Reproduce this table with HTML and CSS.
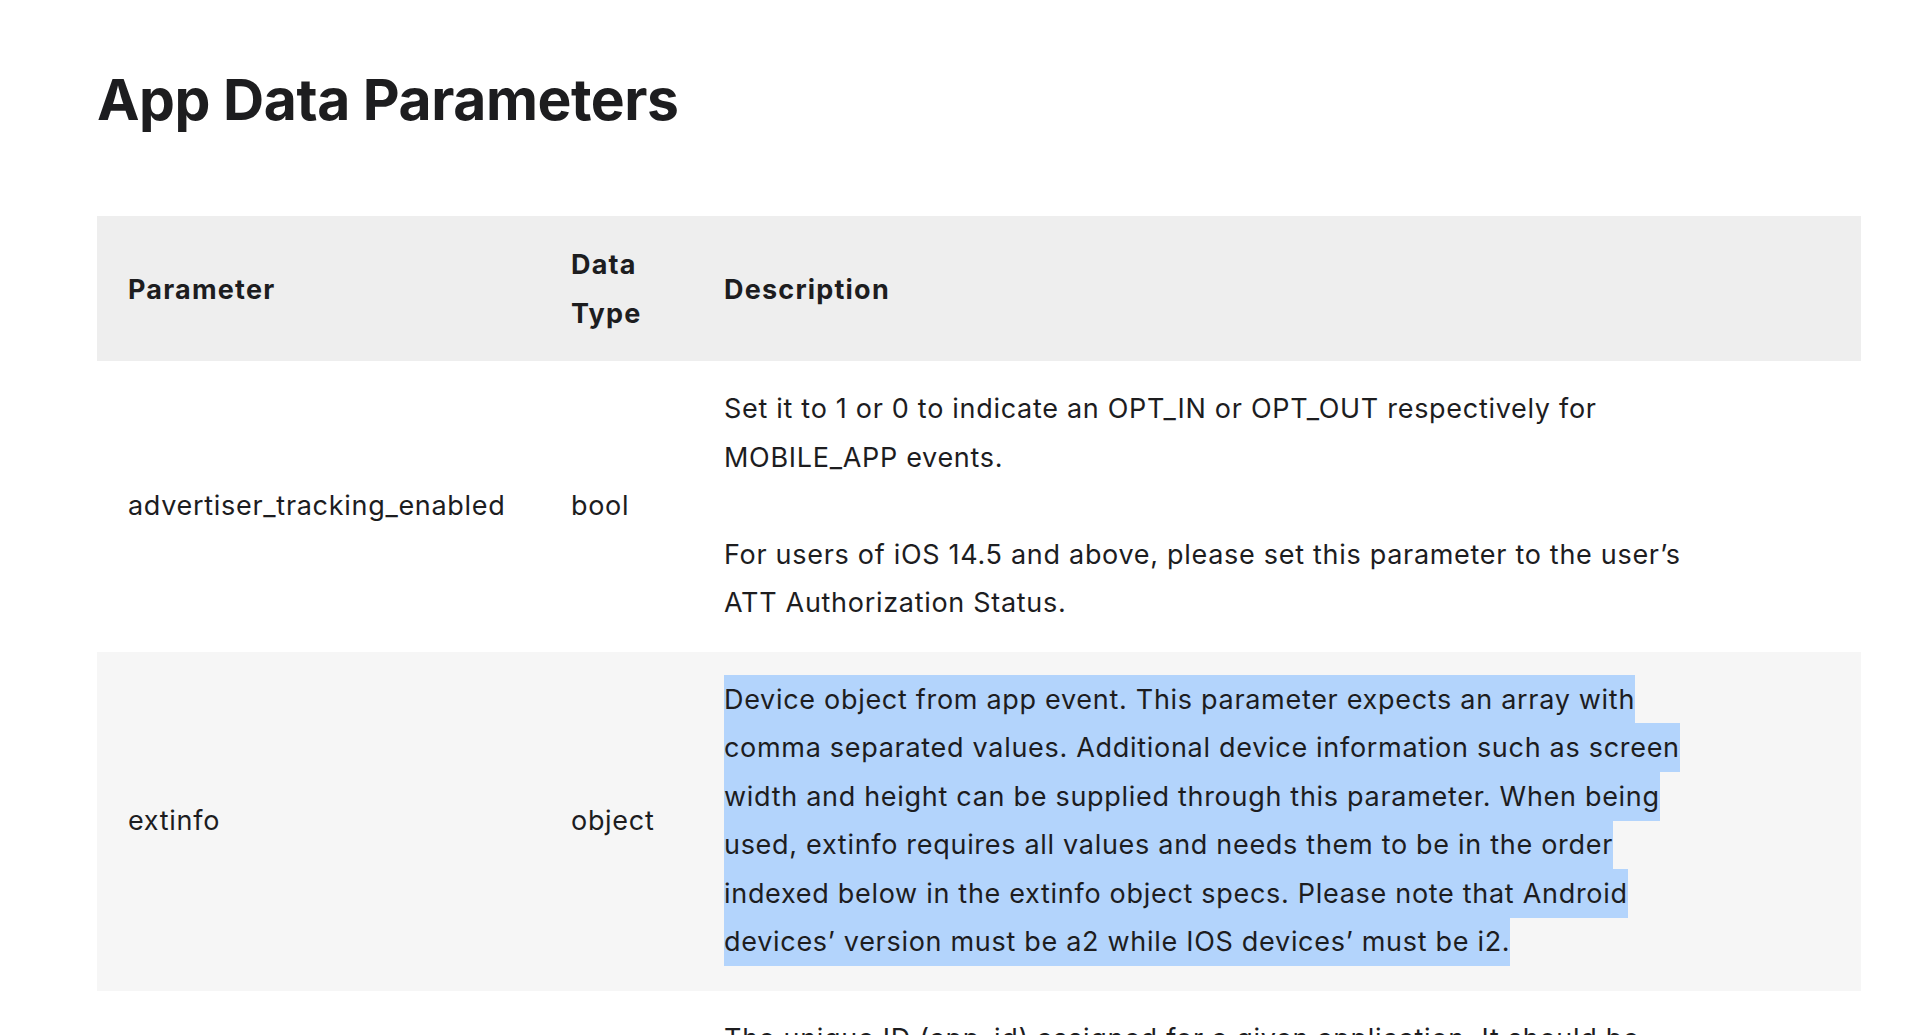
FILE: index.html
```html
<!DOCTYPE html>
<html lang="en">
<head>
<meta charset="utf-8">
<title>App Data Parameters</title>
<link rel="stylesheet" href="styles.css">
</head>
<body>
<main class="page">
  <h1 class="title">App Data Parameters</h1>
  <table class="params">
    <colgroup>
      <col class="col-param">
      <col class="col-type">
      <col class="col-desc">
    </colgroup>
    <thead>
      <tr>
        <th>Parameter</th>
        <th>Data Type</th>
        <th>Description</th>
      </tr>
    </thead>
    <tbody>
      <tr>
        <td>advertiser_tracking_enabled</td>
        <td>bool</td>
        <td>
          <div class="desc">
            <p>Set it to 1 or 0 to indicate an OPT_IN or OPT_OUT respectively for MOBILE_APP events.</p>
            <p>For users of iOS 14.5 and above, please set this parameter to the user’s ATT Authorization Status.</p>
          </div>
        </td>
      </tr>
      <tr>
        <td>extinfo</td>
        <td>object</td>
        <td>
          <div class="desc">
            <p><span class="sel">Device object from app event. This parameter expects an array with comma separated values. Additional device information such as screen width and height can be supplied through this parameter. When being used, extinfo requires all values and needs them to be in the order indexed below in the extinfo object specs. Please note that Android devices’ version must be a2 while IOS devices’ must be i2.</span></p>
          </div>
        </td>
      </tr>
      <tr>
        <td>application_id</td>
        <td>string</td>
        <td>
          <div class="desc">
            <p>The unique ID (app_id) assigned for a given application. It should be consistent with the ID shown in the developer dashboard for that application.</p>
          </div>
        </td>
      </tr>
    </tbody>
  </table>
</main>
</body>
</html>
```
FILE: styles.css
```css
html, body {
  margin: 0;
  padding: 0;
  background: #ffffff;
}

body {
  font-family: Inter, "Noto Sans", "Liberation Sans", sans-serif;
  color: #1d1d1f;
}

.page {
  padding: 66px 59px 0 97px;
}

.title {
  margin: 0 0 82px 0;
  font-size: 57px;
  line-height: 1.2;
  font-weight: 700;
  letter-spacing: -0.45px;
  color: #1d1d1f;
}

.params {
  width: 100%;
  border-collapse: collapse;
  table-layout: fixed;
  font-size: 27px;
  line-height: 48.5px;
  letter-spacing: 0.7px;
}

.col-param { width: 443px; }
.col-type { width: 153px; }

.params th,
.params td {
  padding: 24px 31px;
  text-align: left;
  vertical-align: middle;
}

.params thead th {
  padding-top: 25px;
  padding-bottom: 23px;
}

.params th {
  font-weight: 700;
  letter-spacing: 1.2px;
  background: #eeeeee;
}

.params tbody tr:nth-child(2) td {
  background: #f6f6f6;
}

.desc {
  max-width: 975px;
}

.desc p {
  margin: 0;
}

.desc p + p {
  margin-top: 48.5px;
}

.sel {
  background: #b3d4fc;
  padding: 8px 0;
}
```
